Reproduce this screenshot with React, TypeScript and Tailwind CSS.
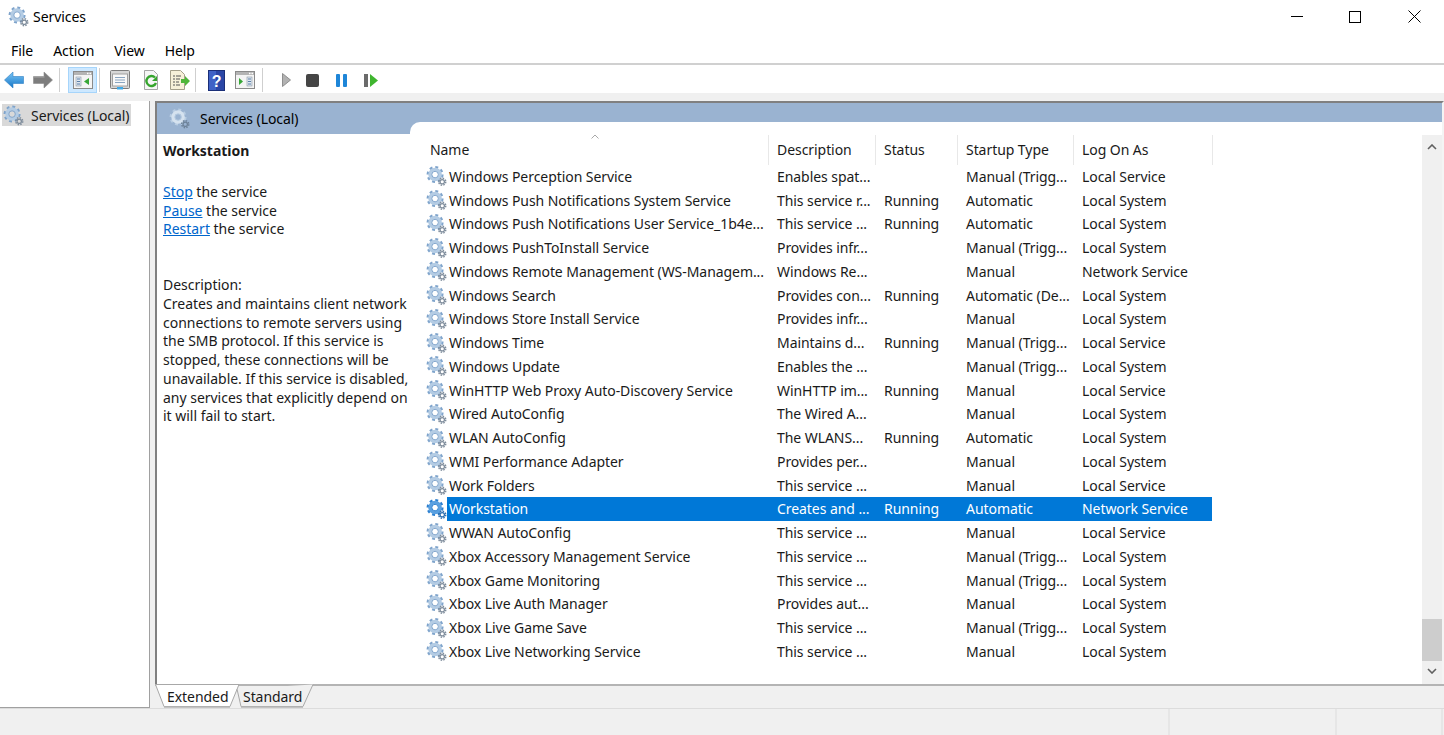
import React from "react";

type Row = [string, string, string, string, string];
const rows: Row[] = [
  ["Windows Perception Service", "Enables spat...", "", "Manual (Trigg...", "Local Service"],
  ["Windows Push Notifications System Service", "This service r...", "Running", "Automatic", "Local System"],
  ["Windows Push Notifications User Service_1b4e...", "This service ...", "Running", "Automatic", "Local System"],
  ["Windows PushToInstall Service", "Provides infr...", "", "Manual (Trigg...", "Local System"],
  ["Windows Remote Management (WS-Managem...", "Windows Re...", "", "Manual", "Network Service"],
  ["Windows Search", "Provides con...", "Running", "Automatic (De...", "Local System"],
  ["Windows Store Install Service", "Provides infr...", "", "Manual", "Local System"],
  ["Windows Time", "Maintains d...", "Running", "Manual (Trigg...", "Local Service"],
  ["Windows Update", "Enables the ...", "", "Manual (Trigg...", "Local System"],
  ["WinHTTP Web Proxy Auto-Discovery Service", "WinHTTP im...", "Running", "Manual", "Local Service"],
  ["Wired AutoConfig", "The Wired A...", "", "Manual", "Local System"],
  ["WLAN AutoConfig", "The WLANS...", "Running", "Automatic", "Local System"],
  ["WMI Performance Adapter", "Provides per...", "", "Manual", "Local System"],
  ["Work Folders", "This service ...", "", "Manual", "Local Service"],
  ["Workstation", "Creates and ...", "Running", "Automatic", "Network Service"],
  ["WWAN AutoConfig", "This service ...", "", "Manual", "Local Service"],
  ["Xbox Accessory Management Service", "This service ...", "", "Manual (Trigg...", "Local System"],
  ["Xbox Game Monitoring", "This service ...", "", "Manual (Trigg...", "Local System"],
  ["Xbox Live Auth Manager", "Provides aut...", "", "Manual", "Local System"],
  ["Xbox Live Game Save", "This service ...", "", "Manual (Trigg...", "Local System"],
  ["Xbox Live Networking Service", "This service ...", "", "Manual", "Local System"],
];

function Gear({ size = 22, big = "#7ea3cb", ring = "#b4cce4", small = "#7f8d9c", hole = "#ffffff", className = "" }: { size?: number; big?: string; ring?: string; small?: string; hole?: string; className?: string }) {
  return (
    <svg width={size} height={size} viewBox="0 0 22 22" className={className}>
      <circle cx="9.500" cy="9.500" r="7.600" fill="none" stroke={big} strokeWidth="2.600" strokeDasharray="3 2.970" />
      <circle cx="9.500" cy="9.500" r="5.200" fill="none" stroke={ring} strokeWidth="3.800" />
      <circle cx="9.500" cy="9.500" r="3.400" fill={hole} stroke={big} strokeWidth="1" />
      <circle cx="17" cy="17" r="3.700" fill="none" stroke={small} strokeWidth="1.500" strokeDasharray="1.600 1.300" />
      <circle cx="17" cy="17" r="2.300" fill="none" stroke={small} strokeWidth="1.300" />
    </svg>
  );
}

function WindowIcon({ right = false }: { right?: boolean }) {
  return (
    <svg width="20" height="20" viewBox="0 0 20 20">
      <rect x="0.500" y="1.500" width="19" height="17" fill="#f4f4f4" stroke="#8a8a8a" />
      <rect x="1" y="2" width="18" height="3" fill="#b4b4b4" />
      <rect x="14" y="2.700" width="1.500" height="1.500" fill="#fff" />
      <rect x="16.500" y="2.700" width="1.500" height="1.500" fill="#fff" />
      {right ? (
        <>
          <path d="M4 8v7l4-3.500z" fill="#37a636" />
          <rect x="12" y="7" width="5" height="9" fill="#dfe7ef" stroke="#8a97a6" strokeWidth="0.600" />
          <path d="M13 9h3M13 11.500h3M13 14h3" stroke="#5b7fa8" />
        </>
      ) : (
        <>
          <rect x="3" y="7" width="5" height="9" fill="#dfe7ef" stroke="#8a97a6" strokeWidth="0.600" />
          <path d="M4 9h3M4 11.500h3M4 14h3" stroke="#5b7fa8" />
          <path d="M16 8v7l-5-3.500z" fill="#37a636" />
        </>
      )}
    </svg>
  );
}

function Sep() {
  return <div className="w-px h-[24px] bg-[#cfcfcf]" />;
}

function Toolbar() {
  return (
    <div className="flex items-center h-[28px] pt-[2px] bg-white">
      <svg width="20" height="18" viewBox="0 0 20 18" className="ml-[4px]">
        <defs>
          <linearGradient id="bk" x1="0" y1="0" x2="0" y2="1">
            <stop offset="0" stopColor="#7cc6f5" />
            <stop offset="1" stopColor="#1476c8" />
          </linearGradient>
        </defs>
        <path d="M0.500 9L9 1v4.500h10.500v7H9V17z" fill="url(#bk)" stroke="#2f7fc4" strokeWidth="0.600" />
      </svg>
      <svg width="20" height="18" viewBox="0 0 20 18" className="ml-[9px]">
        <path d="M19.500 9L11 1v4.500H0.500v7H11V17z" fill="#7d7d7d" stroke="#8c8c8c" strokeWidth="0.600" />
        <path d="M1 6h10.500" stroke="#a8a8a8" />
      </svg>
      <div className="ml-[6px]"><Sep /></div>
      <div className="ml-[8px] w-[29px] h-[26px] bg-[#cde8ff] border border-[#a6d5fb] flex items-center justify-center"><WindowIcon /></div>
      <div className="ml-[2px]"><Sep /></div>
      <svg width="20" height="20" viewBox="0 0 20 20" className="ml-[10px]">
        <rect x="0.500" y="0.500" width="19" height="18" rx="1" fill="#d6d6d6" stroke="#7c7c7c" />
        <rect x="2.500" y="4" width="15" height="12" fill="#f8f8f8" stroke="#a0a0a0" />
        <path d="M5 7.500h10M5 10h10M5 12.500h10" stroke="#8aa4c0" />
        <rect x="7" y="17" width="6" height="2.500" fill="#3fa9e8" />
      </svg>
      <svg width="18" height="20" viewBox="0 0 18 20" className="ml-[12px]">
        <path d="M2.500 0.500h9l4 4v15h-13z" fill="#f6f6f6" stroke="#a5a5a5" />
        <path d="M13 7.500a5 5 0 1 0 1 5.500" fill="none" stroke="#36a52e" strokeWidth="2.400" />
        <path d="M15 6v5h-5z" fill="#36a52e" />
      </svg>
      <svg width="21" height="20" viewBox="0 0 21 20" className="ml-[9px]">
        <path d="M1.500 0.500h10l4 4v15h-14z" fill="#f7f0d9" stroke="#a59f8a" />
        <path d="M4 6h2M7 6h5M4 9h2M7 9h4M4 12h2M7 12h3M4 15h2M7 15h4" stroke="#555" />
        <path d="M12 9h4V6l5 5-5 5v-3h-4z" fill="#4fb63a" />
      </svg>
      <div className="ml-[5px]"><Sep /></div>
      <svg width="17" height="21" viewBox="0 0 17 21" className="ml-[12px]">
        <rect x="0.500" y="0.500" width="16" height="20" fill="#2a46a6" stroke="#1b2f78" />
        <rect x="1" y="1" width="7" height="19" fill="#3f62c6" />
        <text x="8.500" y="16.500" textAnchor="middle" fontSize="16" fontWeight="700" fill="#fff" fontFamily="Liberation Sans, sans-serif">?</text>
      </svg>
      <div className="ml-[10px]"><WindowIcon right /></div>
      <div className="ml-[7px]"><Sep /></div>
      <svg width="9" height="14" viewBox="0 0 9 14" className="ml-[19px]">
        <path d="M0.500 0.500v13L8.500 7z" fill="#b2b2b2" stroke="#8f8f8f" />
      </svg>
      <div className="ml-[15px] w-[13px] h-[13px] rounded-[2px] bg-[#454545]" />
      <div className="ml-[17px] flex gap-[3px]">
        <div className="w-[4px] h-[13px] rounded-[1px] bg-[#1e86d8]" />
        <div className="w-[4px] h-[13px] rounded-[1px] bg-[#1e86d8]" />
      </div>
      <div className="ml-[17px] flex items-center gap-[2px]">
        <div className="w-[4px] h-[13px] bg-[#6b6b6b]" />
        <svg width="8" height="13" viewBox="0 0 8 13"><path d="M0 0v13l8-6.500z" fill="#3fb52f" /></svg>
      </div>
    </div>
  );
}

export default function App() {
  return (
    <div className="w-[1444px] h-[735px] overflow-hidden flex flex-col bg-[#f0f0f0] text-[#1a1a1a] text-[14px] tracking-[-0.06px] font-['Noto_Sans',sans-serif]">
      {/* title bar */}
      <div className="h-[33px] shrink-0 bg-white flex items-center">
        <Gear size={21} className="ml-[8px]" />
        <span className="ml-[4px] text-black">Services</span>
        <div className="ml-auto flex items-center">
          <div className="w-[12px] h-px bg-black mr-[46px]" />
          <div className="w-[12px] h-[12px] border border-black mr-[47px]" />
          <svg width="13" height="13" viewBox="0 0 13 13" className="mr-[23px]"><path d="M0.500 0.500l12 12M12.500 0.500l-12 12" stroke="#000" fill="none" /></svg>
        </div>
      </div>
      {/* menu */}
      <div className="h-[32px] shrink-0 bg-white flex items-center pl-[11px] pt-[5px] gap-[20px] border-b-2 border-[#d0d0d0] text-black">
        <span>File</span>
        <span>Action</span>
        <span>View</span>
        <span>Help</span>
      </div>
      <Toolbar />
      {/* strip */}
      <div className="h-[8px] shrink-0" />
      {/* main */}
      <div className="h-[607px] shrink-0 flex">
        <div className="w-[150px] bg-white border-r border-b border-[#a0a0a0] pt-[3px] pl-[2px]">
          <div className="w-[129px] h-[22px] bg-[#d9d9d9] flex items-center">
            <Gear size={21} className="ml-[1px]" hole="#d9d9d9" />
            <span className="ml-[7px]">Services (Local)</span>
          </div>
        </div>
        <div className="ml-[5px] flex-1 flex flex-col h-full">
          <div className="flex-1 flex border-t-2 border-l-2 border-[#808080] border-r-2 border-r-[#f4f4f4] bg-white min-h-0">
            {/* left details */}
            <div className="w-[253px] flex flex-col">
              <div className="h-[31px] bg-[#9ab3d1] flex items-start pt-[5px] text-black">
                <Gear size={21} className="ml-[12px]" hole="#9ab3d1" small="#6d8299" big="#b8cde2" ring="#d5e2ef" />
                <span className="ml-[10px] leading-[22px]">Services (Local)</span>
              </div>
              <div className="pl-[6px] pt-[8px] leading-[18.750px] whitespace-nowrap tracking-[-0.02px]">
                <div className="font-bold">Workstation</div>
                <div className="mt-[22px]"><span className="text-[#0066cc] underline">Stop</span> the service</div>
                <div><span className="text-[#0066cc] underline">Pause</span> the service</div>
                <div><span className="text-[#0066cc] underline">Restart</span> the service</div>
                <div className="mt-[37px]">Description:</div>
                <div>Creates and maintains client network</div>
                <div>connections to remote servers using</div>
                <div>the SMB protocol. If this service is</div>
                <div>stopped, these connections will be</div>
                <div>unavailable. If this service is disabled,</div>
                <div>any services that explicitly depend on</div>
                <div>it will fail to start.</div>
              </div>
            </div>
            {/* table */}
            <div className="flex-1 bg-[#9ab3d1] flex flex-col min-w-0">
              <div className="mt-[19px] flex-1 bg-white rounded-tl-[10px] flex min-h-0 pl-[12px]">
                <div className="w-[790px] pt-[13px]">
                  <div className="relative flex h-[29.500px] items-center">
                    <svg width="8" height="5" viewBox="0 0 8 5" className="absolute left-[169px] top-[-1px]"><path d="M0.500 4.500L4 1l3.500 3.500" fill="none" stroke="#a8a8a8" /></svg>
                    <div className="w-[347px] shrink-0 pl-[8px] border-r border-[#e8e8e8] h-full flex items-center">Name</div>
                    <div className="w-[107px] shrink-0 pl-[8px] border-r border-[#e8e8e8] h-full flex items-center">Description</div>
                    <div className="w-[82px] shrink-0 pl-[8px] border-r border-[#e8e8e8] h-full flex items-center">Status</div>
                    <div className="w-[116px] shrink-0 pl-[8px] border-r border-[#e8e8e8] h-full flex items-center">Startup Type</div>
                    <div className="w-[139px] shrink-0 pl-[8px] border-r border-[#e8e8e8] h-full flex items-center">Log On As</div>
                  </div>
                  {rows.map((r) => {
                    const sel = r[0] === "Workstation";
                    return (
                      <div key={r[0]} className="flex h-[23.750px] items-center whitespace-nowrap">
                        <div className="w-[25px] shrink-0 flex justify-start pl-[4px]">
                          <Gear size={22} big={sel ? "#2b7fd0" : "#7ea3cb"} ring={sel ? "#5aa0e0" : "#b4cce4"} small={sel ? "#2f6fb0" : "#7f8d9c"} />
                        </div>
                        <div className={sel ? "flex flex-1 h-full items-center bg-[#0078d7] text-white" : "flex flex-1 h-full items-center"}>
                          <div className="w-[322px] shrink-0 pl-[2px]">{r[0]}</div>
                          <div className="w-[107px] shrink-0 pl-[8px]">{r[1]}</div>
                          <div className="w-[81px] shrink-0 pl-[8px]">{r[2]}</div>
                          <div className="w-[116px] shrink-0 pl-[9px]">{r[3]}</div>
                          <div className="w-[139px] shrink-0 pl-[9px]">{r[4]}</div>
                        </div>
                      </div>
                    );
                  })}
                </div>
                {/* scrollbar */}
                <div className="ml-auto w-[20px] mt-[13px] bg-[#f0f0f0] flex flex-col items-center">
                  <svg width="10" height="6" viewBox="0 0 10 6" className="mt-[9px]"><path d="M1 5l4-4 4 4" fill="none" stroke="#606060" strokeWidth="1.600" /></svg>
                  <div className="mt-auto w-full h-[42px] bg-[#cdcdcd]" />
                  <svg width="10" height="6" viewBox="0 0 10 6" className="mt-[7px] mb-[10px]"><path d="M1 1l4 4 4-4" fill="none" stroke="#606060" strokeWidth="1.600" /></svg>
                </div>
              </div>
            </div>
          </div>
          {/* tabs */}
          <div className="border-t-2 border-[#b4b4b4] relative h-[24px] shrink-0 flex text-[#1a1a1a] pl-[12px]">
            <svg width="170" height="24" viewBox="0 0 170 24" className="absolute left-0 top-[-2px]">
              <path d="M0.500 0.500L9 22.500H75L84 0.500Z" fill="#ffffff" stroke="#a8a8a8" />
              <path d="M9 23H75" stroke="#b4b4b4" strokeWidth="1.500" />
              <path d="M82 5L86 22.500H148L158 0.500" fill="#f0f0f0" stroke="#a8a8a8" />
              <path d="M86 23H148" stroke="#b4b4b4" strokeWidth="1.500" />
            </svg>
            <span className="relative w-[76px] leading-[22px]">Extended</span>
            <span className="relative leading-[22px]">Standard</span>
          </div>
        </div>
      </div>
      {/* status */}
      <div className="flex-1 border-t border-[#dcdcdc] flex justify-end">
        <div className="w-[2px] bg-[#e6e6e6] mr-[165px]" />
        <div className="w-[2px] bg-[#e6e6e6] mr-[104px]" />
        <div className="w-[2px] bg-[#e6e6e6] mr-[1px]" />
      </div>
    </div>
  );
}
